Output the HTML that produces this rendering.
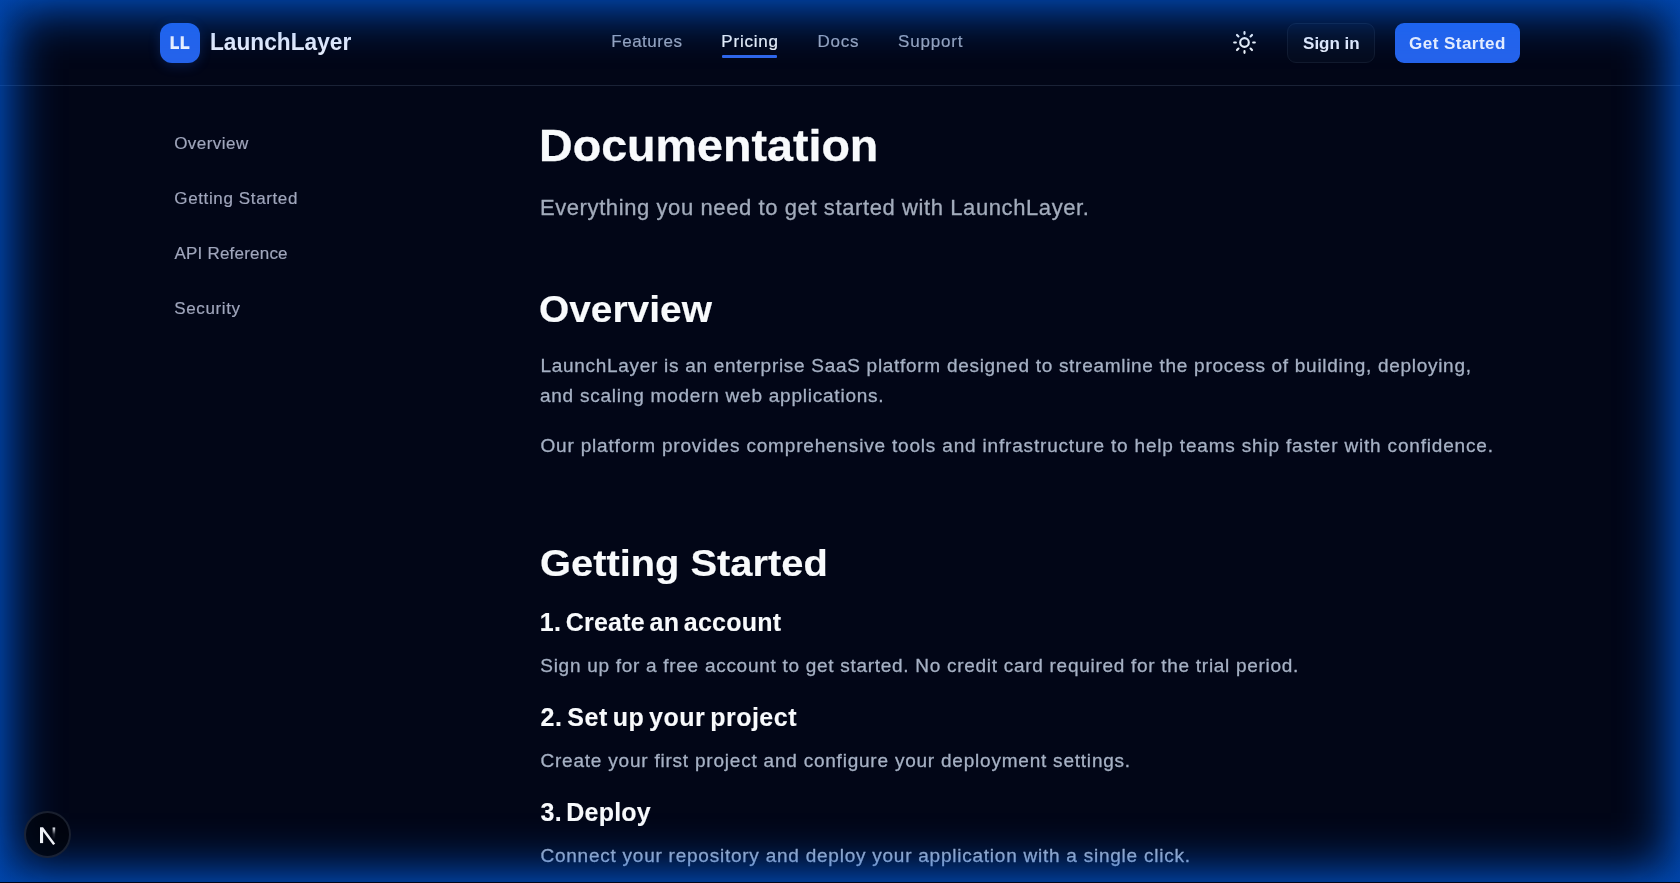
<!DOCTYPE html>
<html lang="en">
<head>
<meta charset="utf-8">
<title>LaunchLayer Docs</title>
<style>
*{box-sizing:border-box;margin:0;padding:0}
html,body{width:1680px;height:883px;overflow:hidden;background:#020617}
body{font-family:"Liberation Sans",sans-serif;color:#f8fafc;position:relative}
.t{display:block;position:absolute;text-decoration:none;white-space:nowrap;line-height:1;transform-origin:0 0}
.hline{position:absolute;left:0;top:85px;width:1680px;height:1px;background:#1a2236}
.logo{position:absolute;left:160px;top:23px;width:40px;height:40px;border-radius:12px;background:#2563eb;box-shadow:0 3px 12px rgba(37,99,235,0.22)}
.ubar{position:absolute;left:722px;top:55px;width:55.3px;height:3px;background:#2f66ea;border-radius:1px}
.btn{position:absolute;top:23px;height:40px;border-radius:9px}
.signin{left:1287px;width:88px;background:#050b1d;border:1px solid #121a2d}
.cta{left:1395px;width:125px;background:#2563eb}
.glow{position:absolute;left:0;top:0;width:1680px;height:882px;pointer-events:none;box-shadow:inset 0 0 55px 2px rgb(0,106,255);z-index:50}
.cornerfix{position:absolute;left:0;top:0;width:1680px;height:882px;pointer-events:none;z-index:51;background:radial-gradient(circle at 0 0,rgba(2,6,23,0.16),rgba(2,6,23,0) 42px),radial-gradient(circle at 100% 0,rgba(2,6,23,0.16),rgba(2,6,23,0) 42px),radial-gradient(circle at 0 100%,rgba(2,6,23,0.16),rgba(2,6,23,0) 42px),radial-gradient(circle at 100% 100%,rgba(2,6,23,0.16),rgba(2,6,23,0) 42px)}
.nbadge{position:absolute;left:24px;top:811px;width:47px;height:47px;border-radius:50%;background:rgba(0,3,10,0.78);border:2px solid rgba(150,170,210,0.17);z-index:60}
</style>
</head>
<body>
<div class="hline"></div>
<div class="logo"><svg width="40" height="40" viewBox="0 0 40 40" style="position:absolute;left:0;top:0"><path d="M10.6 13.3h3.1v9.9h5.3v2.8h-8.4zM20.7 13.3h3.1v9.9h5.6v2.8h-8.7z" fill="#f3f6ff"/></svg></div>
<div class="ubar"></div>
<svg style="position:absolute;left:1232px;top:30px" width="25" height="25" viewBox="0 0 24 24" fill="none" stroke="#f1f5f9" stroke-width="2.05" stroke-linecap="round" stroke-linejoin="round"><circle cx="12" cy="12" r="4.15"/><path d="M12 2.1v1.6M12 20.3v1.6M4.8 4.8l1.4 1.4M17.8 17.8l1.4 1.4M2.1 12h1.6M20.3 12h1.6M6.2 17.8l-1.4 1.4M19.2 4.8l-1.4 1.4"/></svg>
<div class="btn signin"></div>
<div class="btn cta"></div>
<div id="tx" style="position:absolute;left:0;top:0;width:1680px;height:883px;will-change:transform">
<a class="t" id="brand" style="left:209.83px;top:31.28px;font-size:23px;font-weight:700;color:#e9eefb;transform:scaleX(0.9866)">LaunchLayer</a>
<a class="t" id="n1" style="left:611.37px;top:32.51px;font-size:17px;font-weight:400;color:#9ca7bd;letter-spacing:0.490px;-webkit-text-stroke:0.18px #9ca7bd">Features</a>
<a class="t" id="n2" style="left:721.37px;top:32.51px;font-size:17px;font-weight:400;color:#f1f5f9;letter-spacing:0.771px;-webkit-text-stroke:0.18px #f1f5f9">Pricing</a>
<a class="t" id="n3" style="left:817.44px;top:32.51px;font-size:17px;font-weight:400;color:#9ca7bd;letter-spacing:0.769px;-webkit-text-stroke:0.18px #9ca7bd">Docs</a>
<a class="t" id="n4" style="left:898.11px;top:32.51px;font-size:17px;font-weight:400;color:#9ca7bd;letter-spacing:0.805px;-webkit-text-stroke:0.18px #9ca7bd">Support</a>
<a class="t" id="b1" style="left:1303.12px;top:35.36px;font-size:17px;font-weight:700;color:#e9eefb;letter-spacing:-0.037px">Sign in</a>
<a class="t" id="b2" style="left:1408.99px;top:35.36px;font-size:17px;font-weight:700;color:#f1f5ff;letter-spacing:0.482px">Get Started</a>
<a class="t" id="s1" style="left:174.13px;top:135.36px;font-size:17px;font-weight:400;color:#a0a6bc;letter-spacing:0.472px;-webkit-text-stroke:0.18px #a0a6bc">Overview</a>
<a class="t" id="s2" style="left:174.33px;top:190.36px;font-size:17px;font-weight:400;color:#a0a6bc;letter-spacing:0.621px;-webkit-text-stroke:0.18px #a0a6bc">Getting Started</a>
<a class="t" id="s3" style="left:174.50px;top:245.36px;font-size:17px;font-weight:400;color:#a0a6bc;letter-spacing:0.209px;-webkit-text-stroke:0.18px #a0a6bc">API Reference</a>
<a class="t" id="s4" style="left:174.28px;top:300.36px;font-size:17px;font-weight:400;color:#a0a6bc;letter-spacing:0.627px;-webkit-text-stroke:0.18px #a0a6bc">Security</a>
<h1 class="t" id="h1" style="left:539.35px;top:124.00px;font-size:44px;font-weight:700;color:#f8fafc;transform:scaleX(1.0597);-webkit-text-stroke:0.3px #f8fafc">Documentation</h1>
<p class="t" id="sub" style="left:539.92px;top:197.13px;font-size:22px;font-weight:400;color:#a3acbc;letter-spacing:0.597px;-webkit-text-stroke:0.3px #a3acbc">Everything you need to get started with LaunchLayer.</p>
<h2 class="t" id="h2a" style="left:539.19px;top:290.76px;font-size:37.5px;font-weight:700;color:#f8fafc;transform:scaleX(1.0368);-webkit-text-stroke:0.15px #f8fafc">Overview</h2>
<p class="t" id="p1" style="left:540.51px;top:355.92px;font-size:19px;font-weight:400;color:#a6b1c4;letter-spacing:0.707px;-webkit-text-stroke:0.3px #a6b1c4">LaunchLayer is an enterprise SaaS platform designed to streamline the process of building, deploying,</p>
<p class="t" id="p2" style="left:539.96px;top:385.92px;font-size:19px;font-weight:400;color:#a6b1c4;letter-spacing:0.765px;-webkit-text-stroke:0.3px #a6b1c4">and scaling modern web applications.</p>
<p class="t" id="p3" style="left:540.48px;top:435.92px;font-size:19px;font-weight:400;color:#a6b1c4;letter-spacing:0.817px;-webkit-text-stroke:0.3px #a6b1c4">Our platform provides comprehensive tools and infrastructure to help teams ship faster with confidence.</p>
<h2 class="t" id="h2b" style="left:540.06px;top:545.46px;font-size:37.5px;font-weight:700;color:#f8fafc;transform:scaleX(1.0625);-webkit-text-stroke:0.15px #f8fafc">Getting Started</h2>
<h3 class="t" id="h3a" style="left:539.77px;top:609.59px;font-size:25px;font-weight:700;color:#f8fafc;letter-spacing:0.222px;word-spacing:-2.5px;-webkit-text-stroke:0.12px #f8fafc">1. Create an account</h3>
<p class="t" id="p4" style="left:540.31px;top:655.92px;font-size:19px;font-weight:400;color:#a6b1c4;letter-spacing:0.714px;-webkit-text-stroke:0.3px #a6b1c4">Sign up for a free account to get started. No credit card required for the trial period.</p>
<h3 class="t" id="h3b" style="left:540.55px;top:705.44px;font-size:25px;font-weight:700;color:#f8fafc;letter-spacing:0.491px;word-spacing:-2.5px;-webkit-text-stroke:0.12px #f8fafc">2. Set up your project</h3>
<p class="t" id="p5" style="left:540.49px;top:750.82px;font-size:19px;font-weight:400;color:#a6b1c4;letter-spacing:0.781px;-webkit-text-stroke:0.3px #a6b1c4">Create your first project and configure your deployment settings.</p>
<h3 class="t" id="h3c" style="left:540.56px;top:800.44px;font-size:25px;font-weight:700;color:#f8fafc;letter-spacing:0.177px;word-spacing:-2.5px;-webkit-text-stroke:0.12px #f8fafc">3. Deploy</h3>
<p class="t" id="p6" style="left:540.49px;top:845.72px;font-size:19px;font-weight:400;color:#a6b1c4;letter-spacing:0.758px;-webkit-text-stroke:0.3px #a6b1c4">Connect your repository and deploy your application with a single click.</p>
</div>
<div class="nbadge"><svg width="47" height="47" viewBox="0 0 47 47" style="position:absolute;left:-2px;top:-2px"><defs><linearGradient id="ng" x1="0" y1="0" x2="0" y2="1"><stop offset="0" stop-color="#e8ecf4"/><stop offset="0.55" stop-color="#e8ecf4" stop-opacity="0.15"/><stop offset="1" stop-color="#e8ecf4" stop-opacity="0"/></linearGradient></defs><rect x="16" y="16.5" width="3.1" height="15.6" fill="#eef1f7"/><path d="M16 16.5h3.2l12 16.2-2.1 1.2z" fill="#eef1f7"/><rect x="28.6" y="16.5" width="2.6" height="12" fill="url(#ng)"/></svg></div>
<div class="glow"></div>
<div class="cornerfix"></div>
</body>
</html>
